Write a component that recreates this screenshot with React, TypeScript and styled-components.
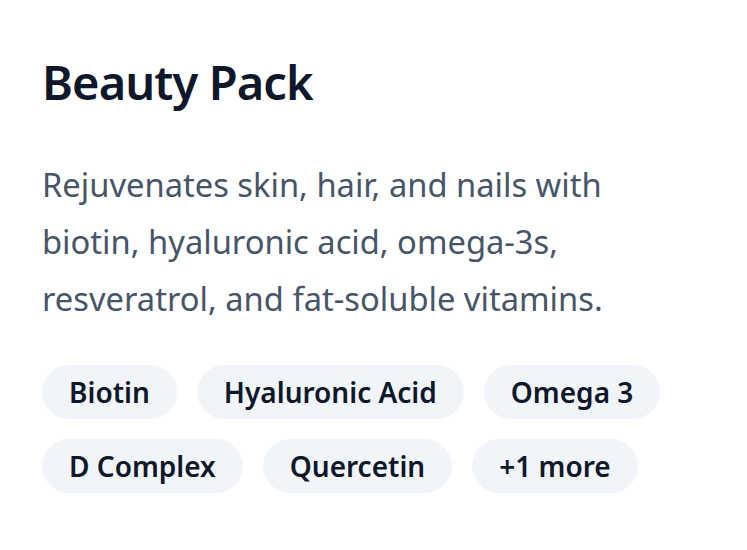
import * as React from 'react';
import styled, { createGlobalStyle } from 'styled-components';

const GlobalStyle = createGlobalStyle`
    html, body {
        margin: 0;
        padding: 0;
        background: #ffffff;
    }
    body {
        font-family: "Noto Sans", "Open Sans", "Liberation Sans", sans-serif;
    }
`;

const Card = styled.div`
    padding: 50px 42px 40px 42px;
    box-sizing: border-box;
    width: 747px;
`;

const Title = styled.h2`
    margin: 0;
    font-size: 47px;
    line-height: 64px;
    font-weight: 600;
    color: #0f172a;
    letter-spacing: -0.9px;
`;

const Description = styled.p`
    margin: 42px 0 0 0;
    font-size: 32.7px;
    line-height: 57px;
    color: #475569;
    max-width: 640px;
`;

const TagList = styled.div`
    margin-top: 38px;
    display: flex;
    flex-wrap: wrap;
    gap: 20px;
    max-width: 640px;
`;

const Tag = styled.span`
    display: inline-block;
    padding: 7px 27px;
    line-height: 40px;
    font-size: 28px;
    font-weight: 600;
    color: #0f172a;
    background-color: #f1f5f9;
    border-radius: 999px;
`;

const ingredients = ["Biotin", "Hyaluronic Acid", "Omega 3", "D Complex", "Quercetin"];

export default function App() {
    return <>
        <GlobalStyle />
        <Card>
            <Title>Beauty Pack</Title>
            <Description>
                Rejuvenates skin, hair, and nails with biotin, hyaluronic acid, omega-3s, resveratrol, and fat-soluble vitamins.
            </Description>
            <TagList>
                {ingredients.map(name => <Tag key={name}>{name}</Tag>)}
                <Tag>+1 more</Tag>
            </TagList>
        </Card>
    </>
}
